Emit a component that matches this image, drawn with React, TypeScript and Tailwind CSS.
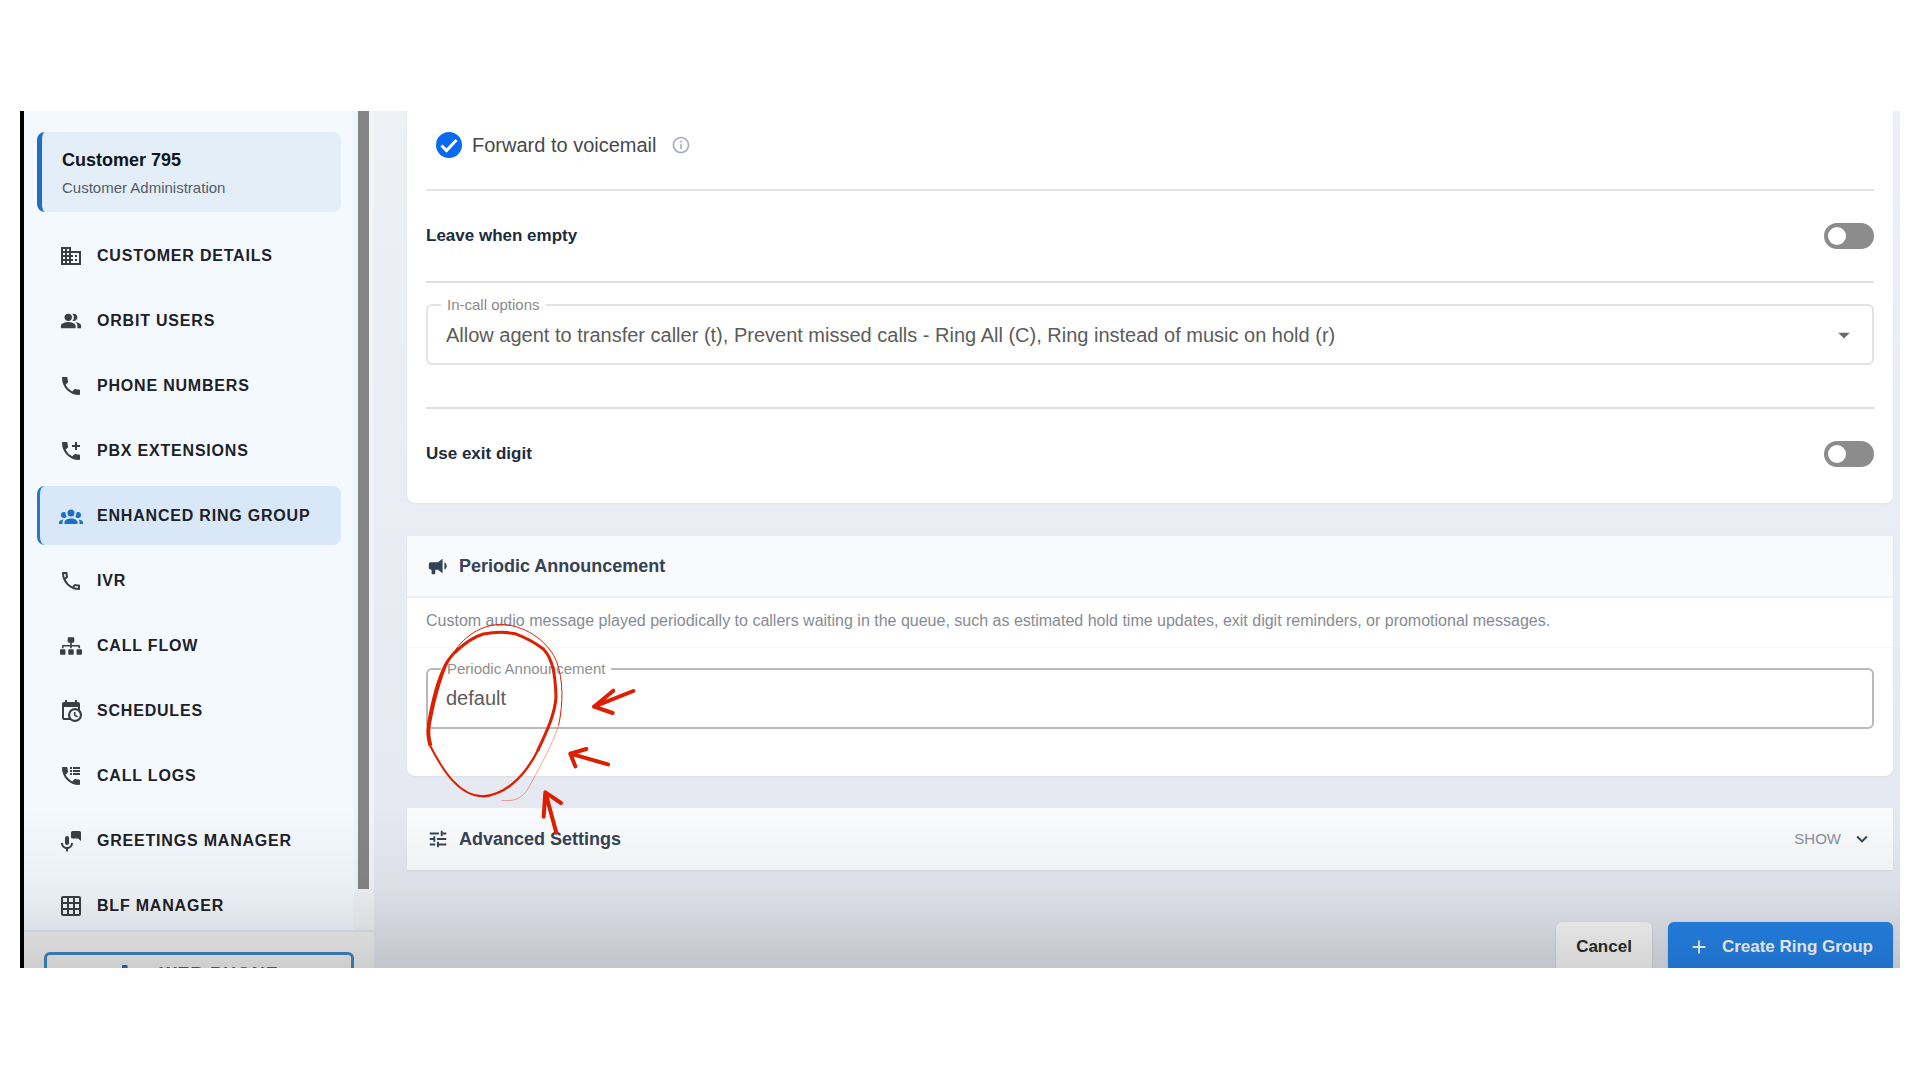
import type { ReactNode } from "react"
import {
  MdAdd,
  MdAddIcCall,
  MdArrowDropDown,
  MdBusiness,
  MdExpandMore,
  MdGridOn,
  MdOutlineInfo,
  MdOutlinePhone,
  MdPeopleAlt,
  MdPhone,
  MdTune,
} from "react-icons/md"
import { FaSitemap } from "react-icons/fa"

function Glyph({ children, size = 24 }: { children: ReactNode; size?: number }) {
  return (
    <svg width={size} height={size} viewBox="0 0 24 24" fill="currentColor" aria-hidden="true">
      {children}
    </svg>
  )
}

function GroupIcon() {
  return (
    <Glyph>
      <path d="M12,5.5A3.5,3.5 0 0,1 15.5,9A3.5,3.5 0 0,1 12,12.5A3.5,3.5 0 0,1 8.5,9A3.5,3.5 0 0,1 12,5.5M5,8C5.56,8 6.08,8.15 6.53,8.42C6.38,9.85 6.8,11.27 7.66,12.38C7.16,13.34 6.16,14 5,14A3,3 0 0,1 2,11A3,3 0 0,1 5,8M19,8A3,3 0 0,1 22,11A3,3 0 0,1 19,14C17.84,14 16.84,13.34 16.34,12.38C17.2,11.27 17.62,9.85 17.47,8.42C17.92,8.15 18.44,8 19,8M5.5,18.25C5.5,16.18 8.41,14.5 12,14.5C15.59,14.5 18.5,16.18 18.5,18.25V20H5.5V18.25M0,20V18.5C0,17.11 1.89,15.94 4.45,15.6C3.86,16.28 3.5,17.22 3.5,18.25V20H0M24,20H20.5V18.25C20.5,17.22 20.14,16.28 19.55,15.6C22.11,15.94 24,17.11 24,18.5V20Z" />
    </Glyph>
  )
}

function CalendarClockIcon() {
  return (
    <Glyph>
      <path d="M15,13H16.5V15.82L18.94,17.23L18.19,18.53L15,16.69V13M19,8H5V19H9.67C9.24,18.09 9,17.07 9,16A7,7 0 0,1 16,9C17.07,9 18.09,9.24 19,9.67V8M5,21C3.89,21 3,20.1 3,19V5C3,3.89 3.89,3 5,3H6V1H8V3H16V1H18V3H19A2,2 0 0,1 21,5V11.1C22.24,12.36 23,14.09 23,16A7,7 0 0,1 16,23C14.09,23 12.36,22.24 11.1,21H5M16,11.15A4.85,4.85 0 0,0 11.15,16C11.15,18.68 13.32,20.85 16,20.85A4.85,4.85 0 0,0 20.85,16C20.85,13.32 18.68,11.15 16,11.15Z" />
      <path d="M4,4H20V8H4Z" />
    </Glyph>
  )
}

function PhoneLogIcon() {
  return (
    <Glyph>
      <path d="M20,15.5C18.8,15.5 17.5,15.3 16.4,14.9H16.1C15.8,14.9 15.6,15 15.4,15.2L13.2,17.4C10.4,15.9 8,13.6 6.6,10.8L8.8,8.6C9.1,8.3 9.2,7.9 9,7.6C8.7,6.5 8.5,5.2 8.5,4C8.5,3.5 8,3 7.5,3H4C3.5,3 3,3.5 3,4C3,13.4 10.6,21 20,21C20.5,21 21,20.5 21,20V16.5C21,16 20.5,15.5 20,15.5Z" />
      <path d="M11,3H13V5H11ZM14,3H21V5H14ZM11,6H13V8H11ZM14,6H21V8H14ZM11,9H13V11H11ZM14,9H21V11H14Z" />
    </Glyph>
  )
}

function MicMessageIcon() {
  return (
    <Glyph>
      <path d="M13.5,2H20.5A1.5,1.5 0 0,1 22,3.5V12L19,9.5H13.5A1.5,1.5 0 0,1 12,8V3.5A1.5,1.5 0 0,1 13.5,2Z" />
      <path d="M8,7A2,2 0 0,1 10,9V14A2,2 0 0,1 6,14V9A2,2 0 0,1 8,7M14,14C14,16.97 11.84,19.44 9,19.92V22.5H7V19.92C4.16,19.44 2,16.97 2,14H4A4,4 0 0,0 12,14H14Z" />
    </Glyph>
  )
}

function BullhornIcon() {
  return (
    <Glyph size={22}>
      <path d="M12,8H4A2,2 0 0,0 2,10V14A2,2 0 0,0 4,16H5V20A1,1 0 0,0 6,21H8A1,1 0 0,0 9,20V16H12L17,20V4L12,8M21.5,12C21.5,13.71 20.54,15.26 19,16V8C20.53,8.75 21.5,10.3 21.5,12Z" />
    </Glyph>
  )
}

const navItems = [
  { label: "Customer Details", icon: <MdBusiness size={24} /> },
  { label: "Orbit Users", icon: <MdPeopleAlt size={22} /> },
  { label: "Phone Numbers", icon: <MdPhone size={24} /> },
  { label: "PBX Extensions", icon: <MdAddIcCall size={24} /> },
  { label: "Enhanced Ring Group", icon: <GroupIcon />, active: true },
  { label: "IVR", icon: <MdOutlinePhone size={24} /> },
  { label: "Call Flow", icon: <FaSitemap size={22} /> },
  { label: "Schedules", icon: <CalendarClockIcon /> },
  { label: "Call Logs", icon: <PhoneLogIcon /> },
  { label: "Greetings Manager", icon: <MicMessageIcon /> },
  { label: "BLF Manager", icon: <MdGridOn size={24} /> },
]

function Sidebar() {
  return (
    <aside className="flex w-[350px] shrink-0 flex-col bg-[#f4f9ff]">
      <div className="flex min-h-0 flex-1">
        <div className="flex-1 overflow-hidden px-[13px] pt-[21px]">
          <div className="flex h-20 flex-col justify-center gap-1 rounded-lg border-l-5 border-[#1b6fc8] bg-[#e3eef9] pt-1 pl-5">
            <p className="text-lg leading-6 font-bold text-[#10151c]">Customer 795</p>
            <p className="text-[15px] leading-6 text-[#555c66]">Customer Administration</p>
          </div>
          <nav className="mt-[14px] flex flex-col gap-1.5">
            {navItems.map((item) => (
              <a
                key={item.label}
                href="#"
                className={
                  item.active
                    ? "flex h-[59px] items-center gap-3.5 rounded-lg border-l-3 border-[#2276cc] bg-[#d9e8f8] pl-[19px] text-[#1b6fc8]"
                    : "flex h-[59px] items-center gap-3.5 rounded-lg border-l-3 border-transparent pl-[19px] text-[#3a3f45]"
                }
              >
                <span className="flex w-6 justify-center">{item.icon}</span>
                <span className="text-base font-bold tracking-wider whitespace-nowrap text-[#1d2127] uppercase">
                  {item.label}
                </span>
              </a>
            ))}
          </nav>
        </div>
        <div className="w-5 bg-[#f1f3f6] pl-1">
          <div className="h-[95%] w-[11px] bg-[#858585]" />
        </div>
      </div>
      <div className="h-[38px] overflow-hidden border-t-2 border-[#dce8f4] bg-[#f2f2f2] px-5 pt-5">
        <button
          type="button"
          className="flex h-11 w-full items-center justify-center gap-4 rounded-md border-3 border-[#4288cb] text-lg font-bold tracking-wider text-[#1b6fc8]"
        >
          <MdPhone size={24} />
          WEB PHONE
        </button>
      </div>
    </aside>
  )
}

function ToggleRow({ id, label }: { id: string; label: string }) {
  return (
    <div className="flex h-[90px] items-center justify-between">
      <label htmlFor={id} className="text-[17px] font-bold text-[#1c2b3d]">
        {label}
      </label>
      <input
        id={id}
        type="checkbox"
        role="switch"
        className="flex h-[26px] w-[50px] appearance-none items-center rounded-full bg-[#8c8c8c] px-1 before:size-[18px] before:rounded-full before:bg-white before:content-['']"
      />
    </div>
  )
}

function Annotation() {
  return (
    <svg
      className="pointer-events-none absolute top-[84px] left-[13px] z-10 size-[220px]"
      viewBox="60 0 660 660"
      fill="none"
      stroke="#dd1f00"
      strokeLinecap="round"
      strokeLinejoin="round"
      aria-hidden="true"
    >
      <path
        fill="#dd1f00"
        stroke="none"
        d="M86 379C77 345 78 330 82 305C95 235 108 185 128 142C140 115 158 96 175 82L178 90C158 108 148 122 138 145C115 205 104 255 92 318C89 340 92 355 97 376Z"
      />
      <path
        strokeWidth="9"
        d="M166 96C195 68 220 51 250 42C285 36 320 36 345 41C380 54 405 68 430 87C460 118 466 170 468 230C466 280 440 335 414 390"
      />
      <path strokeWidth="7" d="M414 390C370 478 310 525 250 529" />
      <path strokeWidth="6" d="M250 529C180 530 130 455 91 378" />
      <path strokeWidth="3" d="M168 88C205 35 260 13 305 13C390 18 450 75 470 125C490 180 490 250 476 315" />
      <path strokeWidth="2" strokeOpacity="0.6" d="M476 315C462 365 420 440 385 505C370 528 355 540 325 542H306" />
      <g strokeWidth="12">
        <path d="M700 213L582 260M640 212L582 260L638 279" />
        <path d="M624 433L511 401M559 387L511 401L526 439" />
        <path d="M469 638L436 517M483 549L436 517L431 590" />
      </g>
    </svg>
  )
}

function RingGroupForm() {
  return (
    <main className="min-w-0 flex-1 overflow-hidden bg-linear-to-b from-[#eef0f4] via-[#e9ecf3] to-[#e4e7f0] pr-[7px] pl-[33px]">
      <section className="rounded-b-lg bg-white px-[19px] pt-5 pb-1 shadow-xs">
        <div className="flex h-7 items-center pl-2.5">
          <span className="relative flex size-[26px]">
            <input
              id="voicemail"
              type="checkbox"
              defaultChecked
              className="size-[26px] appearance-none rounded-full bg-[#0969f0]"
            />
            <svg
              className="pointer-events-none absolute inset-0 size-[26px]"
              viewBox="0 0 26 26"
              fill="none"
              stroke="white"
              strokeWidth="3"
              aria-hidden="true"
            >
              <path d="M5.5 13.5L10.5 18.5L20.5 8" />
            </svg>
          </span>
          <label htmlFor="voicemail" className="ml-2.5 text-xl text-[#45484d]">
            Forward to voicemail
          </label>
          <MdOutlineInfo size={20} className="ml-3.5 text-[#a9adb8]" />
        </div>
        <div className="mt-[30px] border-t-2 border-[#e3e3e3]" />
        <ToggleRow id="leave-empty" label="Leave when empty" />
        <div className="border-t-2 border-[#dfdfdf]" />
        <div className="relative mt-[21px] mb-[42px]">
          <label
            htmlFor="in-call"
            className="absolute -top-[7px] left-[15px] bg-white px-1.5 text-[15px] leading-4 text-[#8a8a8a]"
          >
            In-call options
          </label>
          <select
            id="in-call"
            className="h-[61px] w-full appearance-none rounded-md border-2 border-[#e3e3e3] bg-white px-[18px] text-xl text-[#5c5c5c]"
          >
            <option>
              Allow agent to transfer caller (t), Prevent missed calls - Ring All (C), Ring instead of music on hold (r)
            </option>
          </select>
          <MdArrowDropDown
            size={28}
            className="pointer-events-none absolute top-[17px] right-4 text-[#6b6b6b]"
          />
        </div>
        <div className="border-t-2 border-[#e0e0e0]" />
        <ToggleRow id="exit-digit" label="Use exit digit" />
      </section>

      <section className="relative mt-[33px] rounded-b-lg bg-white shadow-xs">
        <h2 className="flex h-[62px] items-center gap-2.5 border-b-2 border-[#edf0f4] bg-[#f8fafb] px-5 text-lg font-bold text-[#344256]">
          <BullhornIcon />
          Periodic Announcement
        </h2>
        <p className="flex h-[50px] items-center border-b border-[#f7f7f7] px-[19px] pb-1 text-base text-[#868b93]">
          Custom audio message played periodically to callers waiting in the queue, such as estimated hold time updates,
          exit digit reminders, or promotional messages.
        </p>
        <div className="px-[19px] pt-5 pb-[47px]">
          <div className="relative">
            <label
              htmlFor="announcement"
              className="absolute -top-[7px] left-[15px] bg-white px-1.5 text-[15px] leading-4 text-[#8f8f8f]"
            >
              Periodic Announcement
            </label>
            <input
              id="announcement"
              type="text"
              defaultValue="default"
              className="block h-[61px] w-full rounded-md border-2 border-[#b9b9b9] bg-white px-[18px] text-xl text-[#5c5c5c]"
            />
          </div>
        </div>
        <Annotation />
      </section>

      <section className="mt-8 flex h-[62px] items-center justify-between bg-[#f9fafb] px-5 shadow-xs">
        <h2 className="flex items-center gap-2.5 text-lg font-bold text-[#344256]">
          <MdTune size={22} />
          Advanced Settings
        </h2>
        <button type="button" className="flex items-center gap-2.5 text-[15px] text-[#8a8f9a]">
          SHOW
          <MdExpandMore size={22} className="text-[#344256]" />
        </button>
      </section>

      <div className="mt-[52px] flex justify-end gap-4">
        <button type="button" className="h-[50px] rounded-md bg-[#fafafa] px-5 text-[17px] font-bold text-[#2b2b2b] shadow-sm">
          Cancel
        </button>
        <button
          type="button"
          className="flex h-[50px] items-center gap-3 rounded-md bg-[#2585ec] px-5 text-[17px] font-bold text-white shadow-sm"
        >
          <MdAdd size={22} />
          Create Ring Group
        </button>
      </div>
    </main>
  )
}

export default function App() {
  return (
    <div className="flex h-screen bg-white px-5 pt-[111px] pb-28 font-['Liberation_Sans',Arial,sans-serif]">
      <div className="relative flex min-w-0 flex-1 overflow-hidden border-l-4 border-black">
        <Sidebar />
        <RingGroupForm />
        <div className="pointer-events-none absolute inset-x-0 bottom-0 h-40 bg-linear-to-b from-transparent via-black/4 to-black/15" />
      </div>
    </div>
  )
}
